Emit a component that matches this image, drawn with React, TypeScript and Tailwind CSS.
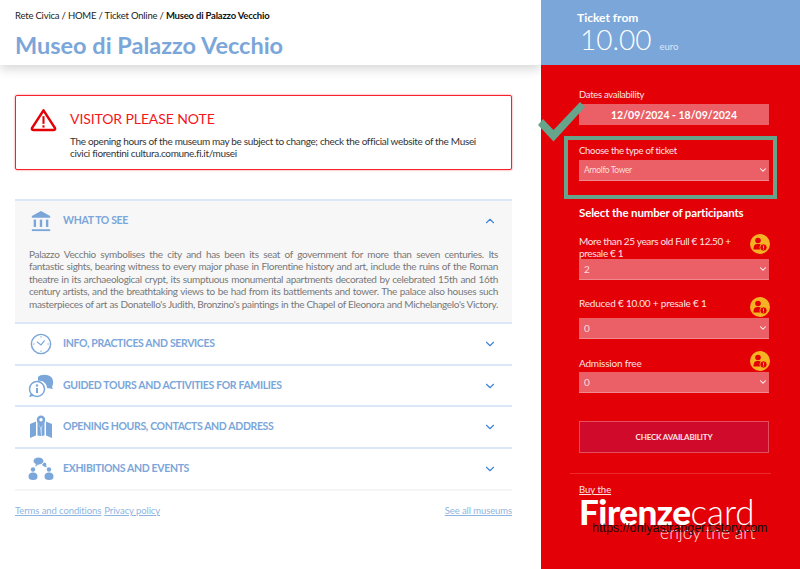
import { ChevronDown, ChevronUp } from 'lucide-react'

const font = { fontFamily: 'Lato, "Noto Sans", sans-serif' }

const description = [
  'Palazzo Vecchio symbolises the city and has been its seat of government for more than seven centuries. Its',
  'fantastic sights, bearing witness to every major phase in Florentine history and art, include the ruins of the Roman',
  'theatre in its archaeological crypt, its sumptuous monumental apartments decorated by celebrated 15th and 16th',
  'century artists, and the breathtaking views to be had from its battlements and tower. The palace also houses such',
  "masterpieces of art as Donatello's Judith, Bronzino's paintings in the Chapel of Eleonora and Michelangelo's Victory.",
]

function BankIcon() {
  return (
    <svg viewBox="0 0 24 24" className="w-[22px] h-[22px]" fill="#7ba6d9">
      <path d="M12 1 L22 6.5 V8.5 H2 V6.5 Z" />
      <rect x="4" y="10.5" width="2.6" height="8" />
      <rect x="10.7" y="10.5" width="2.6" height="8" />
      <rect x="17.4" y="10.5" width="2.6" height="8" />
      <rect x="2" y="21" width="20" height="2" />
    </svg>
  )
}

function ClockIcon() {
  return (
    <svg viewBox="0 0 24 24" className="w-[22px] h-[22px]" fill="none" stroke="#7ba6d9">
      <circle cx="12" cy="12" r="10.5" strokeWidth="1.6" />
      <path d="M7.5 9.5 L12 13 L16 8" strokeWidth="1.2" />
      <path d="M12 3.5v1.5M12 19v1.5M3.5 12h1.5M19 12h1.5" strokeWidth="1.2" />
    </svg>
  )
}

function ChatIcon() {
  return (
    <svg viewBox="0 0 26 24" className="w-[26px] h-[24px]" fill="#7ba6d9">
      <path d="M10 3 C13 0 21 0 24 4 C26 8 25 11 24 13 L25 15 L19 14 C19 10 15 6 10 7 Z" />
      <circle cx="9" cy="15" r="7.5" fill="#fff" stroke="#7ba6d9" strokeWidth="1.5" />
      <rect x="8" y="14" width="2" height="5" />
      <circle cx="9" cy="11.5" r="1.2" />
      <path d="M3 19 L1 23 L6 22 Z" />
    </svg>
  )
}

function MapIcon() {
  return (
    <svg viewBox="0 0 24 24" className="w-[24px] h-[24px]" fill="#7ba6d9">
      <path d="M1 9 L7 6.5 V20.5 L1 23 Z" />
      <path d="M8.5 6.5 L11.5 13 L12 21 L8.5 20.5 Z" />
      <path d="M15.5 6.5 L12.5 13 L12.5 21 L15.5 20.5 Z" />
      <path d="M17 6.5 L23 9 V23 L17 20.5 Z" />
      <path fillRule="evenodd" d="M12 0.5 a4.2 4.2 0 0 1 4.2 4.2 C16.2 7.5 13 11 12 13 C11 11 7.8 7.5 7.8 4.7 A4.2 4.2 0 0 1 12 0.5 Z M12 3 a1.7 1.7 0 1 0 0 3.4 a1.7 1.7 0 0 0 0 -3.4 Z" />
    </svg>
  )
}

function PeopleIcon() {
  return (
    <svg viewBox="0 0 26 24" className="w-[26px] h-[24px]" fill="#7ba6d9">
      <ellipse cx="10.5" cy="4" rx="5" ry="3.5" />
      <path d="M8 7 L7 9.5 L11 7.5 Z" />
      <path d="M16 5.5 C18 5.5 19 7 18 8.5 L19 10.5 L16 9.5 L14 8 Z" />
      <circle cx="5" cy="12.5" r="2.2" />
      <path d="M0.5 20 C0.5 16.5 2.5 15.5 5 15.5 C7.5 15.5 9.5 16.5 9.5 20 C9.5 22 8 23 5 23 C2 23 0.5 22 0.5 20 Z" />
      <circle cx="21" cy="12.5" r="2.2" />
      <path d="M16.5 20 C16.5 16.5 18.5 15.5 21 15.5 C23.5 15.5 25.5 16.5 25.5 20 C25.5 22 24 23 21 23 C18 23 16.5 22 16.5 20 Z" />
    </svg>
  )
}

function WarningIcon() {
  return (
    <svg viewBox="0 0 28 25" className="w-[27px] h-[24px] -ml-[1px] -mt-[1px] shrink-0" fill="none">
      <path d="M14 2.5 L26 21 Q26.5 23 24.5 23 H3.5 Q1.5 23 2 21 Z" stroke="#e30007" strokeWidth="2.6" strokeLinejoin="round" />
      <rect x="12.9" y="8.5" width="2.2" height="8" fill="#e30007" />
      <rect x="12.9" y="18" width="2.2" height="2.4" fill="#e30007" />
    </svg>
  )
}

function InfoBadge() {
  return (
    <svg viewBox="0 0 20 20" className="w-[20px] h-[20px]">
      <circle cx="10" cy="10" r="10" fill="#f5b324" />
      <circle cx="8" cy="6.5" r="2.8" fill="#e30007" />
      <path d="M3.5 15.5 C3.5 11 5 10 8 10 C11 10 12 11 12 15.5 Z" fill="#e30007" />
      <circle cx="13.5" cy="13.5" r="3.6" fill="#e30007" stroke="#f5b324" strokeWidth="0.8" />
      <rect x="13" y="11.5" width="1" height="2.6" fill="#f5b324" />
      <rect x="13" y="14.6" width="1" height="1" fill="#f5b324" />
    </svg>
  )
}

function Select({ value, small }: { value: string; small?: boolean }) {
  return (
    <div className={`h-[21px] bg-[#ea6066] border-b border-[#f08a8e] flex items-center justify-between pl-[5px] pr-[1px] text-[#fbdcdd] ${small ? 'text-[8.5px] tracking-[-0.4px]' : 'text-[10px]'}`}>
      <span>{value}</span>
      <ChevronDown className="w-[10px] h-[10px] text-white" strokeWidth={2.5} />
    </div>
  )
}

function Row({ icon, label, last }: { icon: React.ReactNode; label: string; last?: boolean }) {
  return (
    <div className={`h-[41.7px] flex items-center border-b-2 ${last ? 'border-[#f5f5f5]' : 'border-[#dbe7f6]'}`}>
      <div className="w-[48px] flex justify-center shrink-0 pl-[4px]">{icon}</div>
      <span className="flex-1 text-[10.5px] tracking-[-0.35px] font-bold text-[#7ba6d9]">{label}</span>
      <ChevronDown className="w-[14px] h-[14px] mr-[15px] text-[#3f86dc]" strokeWidth={2} />
    </div>
  )
}

export default function App() {
  return (
    <div className="relative w-[800px] h-[569px] overflow-hidden bg-white flex" style={font}>
      {/* Left column */}
      <div className="w-[541px] shrink-0">
        <header className="h-[65px] bg-white shadow-[0_4px_10px_rgba(0,0,0,0.16)] pl-[15px] pt-[9px]">
          <p className="text-[9.5px] tracking-[-0.2px] leading-[14px] text-[#222]">
            Rete Civica / HOME / Ticket Online / <b className="text-[#111]">Museo di Palazzo Vecchio</b>
          </p>
          <h1 className="mt-[7px] text-[23.5px] leading-[30px] font-bold text-[#7ba6d9]">Museo di Palazzo Vecchio</h1>
        </header>

        <div className="px-[15px] w-[527px]">
          {/* Alert */}
          <div className="mt-[30px] h-[75px] w-[497px] border border-[#f5222a] rounded-[2px] shadow-[0_0_2px_rgba(245,34,42,0.7)] flex pl-[15px] pt-[13px]">
            <WarningIcon />
            <div className="ml-[13px]">
              <h2 className="text-[14px] tracking-[-0.1px] leading-[20px] text-[#f5151c]">VISITOR PLEASE NOTE</h2>
              <p className="mt-[6px] text-[10px] tracking-[-0.33px] leading-[12px] text-[#333] w-[412px]">
                The opening hours of the museum may be subject to change; check the official website of the Musei civici fiorentini cultura.comune.fi.it/musei
              </p>
            </div>
          </div>

          {/* Accordion */}
          <div className="mt-[29px] w-[497px] border-t-2 border-[#dbe7f6]">
            <div className="h-[123px] bg-[#f7f7f7] border-b-2 border-[#dbe7f6]">
              <div className="h-[40px] flex items-center">
                <div className="w-[48px] flex justify-center shrink-0 pl-[4px]"><BankIcon /></div>
                <span className="flex-1 text-[10.5px] tracking-[-0.35px] font-bold text-[#7ba6d9]">WHAT TO SEE</span>
                <ChevronUp className="w-[14px] h-[14px] mr-[15px] text-[#3f86dc]" strokeWidth={2} />
              </div>
              <div className="mt-[7px] px-[14px] text-[10px] tracking-[-0.32px] leading-[12.4px] text-[#777]">
                {description.map(line => (
                  <p key={line} className="text-justify [text-align-last:justify]">{line}</p>
                ))}
              </div>
            </div>
            <Row icon={<ClockIcon />} label="INFO, PRACTICES AND SERVICES" />
            <Row icon={<ChatIcon />} label="GUIDED TOURS AND ACTIVITIES FOR FAMILIES" />
            <Row icon={<MapIcon />} label="OPENING HOURS, CONTACTS AND ADDRESS" />
            <Row icon={<PeopleIcon />} label="EXHIBITIONS AND EVENTS" last />
          </div>

          <div className="mt-[12px] w-[497px] flex justify-between text-[9.5px] tracking-[-0.1px] leading-[16px] text-[#8fb4e0] underline">
            <div className="flex gap-[3px]">
              <span>Terms and conditions</span>
              <span>Privacy policy</span>
            </div>
            <span>See all museums</span>
          </div>
        </div>
      </div>

      {/* Right column */}
      <aside className="w-[259px] shrink-0 flex flex-col">
        <div className="h-[65px] bg-[#7ba6d9] pl-[36px] pt-[10px] text-white">
          <p className="text-[12px] leading-[15px] font-bold">Ticket from</p>
          <p className="leading-[30px] -mt-[1px] pl-[3px]">
            <span className="text-[28px] font-light">10.00</span>
            <span className="ml-[8px] text-[9.5px] text-[#dbe7f6]">euro</span>
          </p>
        </div>

        <div className="flex-1 bg-[#e30007] text-white">
          <div className="pl-[38px] pr-[31px] text-[10px] tracking-[-0.2px] leading-[12px] text-[#fde3e4]">
            <p className="mt-[24px] text-[9.5px] tracking-[-0.3px]">Dates availability</p>
            <div className="mt-[3px] h-[21px] bg-[#ea6066] flex items-center justify-center text-[10.5px] tracking-normal font-bold text-white">
              12/09/2024 - 18/09/2024
            </div>
            <p className="mt-[20px] text-[9.5px] tracking-[-0.3px]">Choose the type of ticket</p>
            <div className="mt-[3px]"><Select value="Arnolfo Tower" small /></div>

            <h3 className="mt-[25px] text-[11.5px] tracking-[-0.15px] leading-[14px] font-bold text-white">Select the number of participants</h3>

            <div className="mt-[15px] flex items-start justify-between">
              <p className="w-[160px] tracking-[-0.35px]">More than 25 years old Full € 12.50 + presale € 1</p>
              <div className="-mt-[1px] -mr-[1px]"><InfoBadge /></div>
            </div>
            <Select value="2" />

            <div className="mt-[17px] h-[20px] flex items-start justify-between">
              <p>Reduced € 10.00 + presale € 1</p>
              <div className="-mr-[1px]"><InfoBadge /></div>
            </div>
            <div className="mt-[1px]"><Select value="0" /></div>

            <div className="mt-[12px] h-[20px] flex items-start justify-between">
              <p className="mt-[6px]">Admission free</p>
              <div className="-mr-[1px]"><InfoBadge /></div>
            </div>
            <div className="mt-[1px]"><Select value="0" /></div>

            <button className="mt-[28px] w-full h-[32px] bg-[#d00a2a] border border-[#e2505f] text-[8px] tracking-[-0.2px] font-bold text-[#fde3e4]">
              CHECK AVAILABILITY
            </button>
          </div>

          {/* Firenzecard */}
          <div className="mt-[20px] mx-[29px] border-t border-[#ee2a30]" />
          <div className="pl-[38px] pt-[10px]">
            <p className="text-[9.5px] leading-[12px] underline text-[#fde3e4]">Buy the</p>
            <p className="text-[35px] leading-[30px]">
              <span className="font-black tracking-[-0.5px]">Firenze</span><span className="font-light">card</span>
            </p>
            <p className="text-[17.5px] leading-[16px] font-light pl-[81px] -mt-[1px] text-[#fde3e4]">enjoy the art</p>
          </div>
        </div>
      </aside>

      {/* Green overlay marks */}
      <div className="absolute left-[564px] top-[136px] w-[213px] h-[63px] border-4 border-[#66a58b]" />
      <svg className="absolute left-[536px] top-[100px] w-[52px] h-[44px]" viewBox="536 100 52 44" fill="#66a58b">
        <polygon points="538,125 543,119 553.5,130 580,102 585,107 553.5,141.5" />
      </svg>
      <span
        className="absolute left-[592px] top-[521px] text-[12.5px] leading-[15px] text-[#111] whitespace-nowrap"
        style={{ fontFamily: '"Liberation Sans", sans-serif' }}
      >
        https://onlyastranger.tistory.com
      </span>
    </div>
  )
}
